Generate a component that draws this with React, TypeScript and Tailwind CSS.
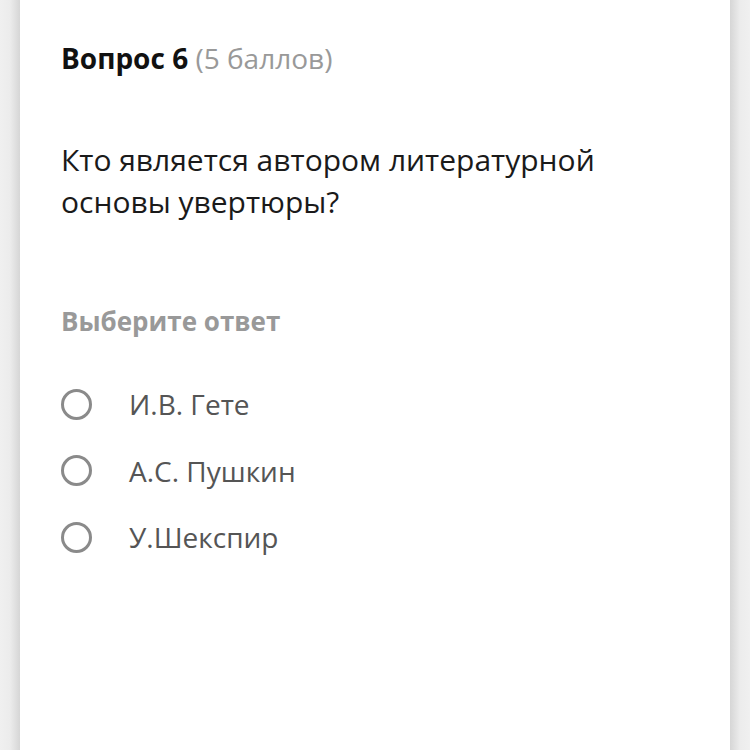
export default function App() {
  return (
    <div className="w-[750px] h-[750px] flex bg-white overflow-hidden" style={{ fontFamily: '"Open Sans", sans-serif' }}>
      <div className="w-[20px] h-full bg-gradient-to-r from-[#f0f0f0] via-[#ececec] to-[#d6d6d6]" />
      <div className="flex-1 h-full bg-white pl-[41px] pt-[40px]">
        <div className="text-[28px] leading-[36px] whitespace-nowrap">
          <span className="font-bold text-[#111]">Вопрос 6</span>{" "}
          <span className="text-[#999]">(5 баллов)</span>
        </div>
        <div className="mt-[63px] text-[30px] leading-[42px] text-[#1a1a1a] whitespace-nowrap">
          Кто является автором литературной
          <br />
          основы увертюры?
        </div>
        <div className="mt-[81px] text-[26px] leading-[34px] font-bold text-[#999]">Выберите ответ</div>
        <div className="mt-[48px] flex flex-col gap-[30.5px]">
          {["И.В. Гете", "А.С. Пушкин", "У.Шекспир"].map((t) => (
            <div key={t} className="flex items-center h-[36px]">
              <div className="w-[31px] h-[31px] rounded-full border-[3.5px] border-[#8a8a8a]" />
              <span className="ml-[37px] text-[28px] text-[#555]">{t}</span>
            </div>
          ))}
        </div>
      </div>
      <div className="w-[20px] h-full bg-gradient-to-r from-[#d6d6d6] via-[#ececec] to-[#f0f0f0]" />
    </div>
  );
}
